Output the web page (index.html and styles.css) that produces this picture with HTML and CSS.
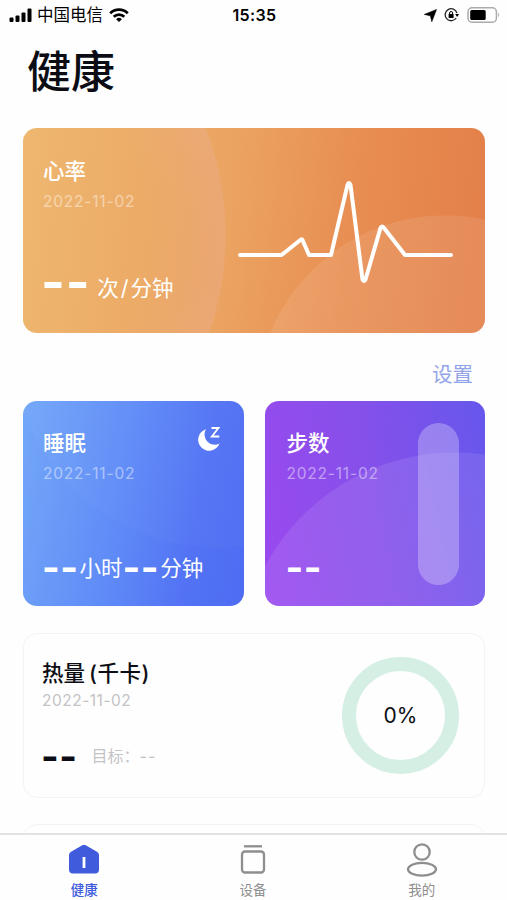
FILE: index.html
```
<!DOCTYPE html>
<html lang="zh-CN">
    <head>
        <meta charset="utf-8">
        <title>健康</title>
        <link rel="stylesheet" href="styles.css">
    </head>

    <body>
        <header class="status">
            <div class="status-left">
                <svg class="signal" width="24" height="16" viewBox="0 0 24 16">
                    <rect x="0.5" y="10.5" width="4" height="4.5" rx="1"/>
                    <rect x="6.5" y="8.5" width="4" height="6.5" rx="1"/>
                    <rect x="12.5" y="5.5" width="4" height="9.5" rx="1"/>
                    <rect x="18.5" y="1.5" width="4" height="13.5" rx="1"/>
                </svg>
                <span class="carrier">中国电信</span>
                <svg width="20" height="16" viewBox="0 0 20 16" fill="none" stroke="#000" stroke-width="2.7">
                    <path d="M1.2 6.2a12.4 12.4 0 0 1 17.6 0"/>
                    <path d="M4.7 9.8a7.6 7.6 0 0 1 10.6 0"/>
                    <path d="M7.1 12.2a4.1 4.1 0 0 1 5.8 0L10 15z" fill="#000" stroke="none"/>
                </svg>
            </div>
            <div class="clock">15:35</div>
            <div class="status-right">
                <svg width="13" height="13" viewBox="0 0 13 13">
                    <path d="M12.5 0.5L7.8 12.7L6.4 6.8L0.3 5.4z" stroke="#000" stroke-width="0.6" stroke-linejoin="round"/>
                </svg>
                <svg width="16" height="14" viewBox="0 0 16 14">
                    <path d="M12.2 10A6 6 0 1 1 12.9 5" fill="none" stroke="#222" stroke-width="1.3"/>
                    <path d="M11.2 6h3.8l-1.9 3z"/>
                    <rect x="4.6" y="6" width="5" height="4" rx="0.6"/>
                    <path d="M5.6 6.2V5a1.5 1.5 0 0 1 3 0v1.2" fill="none" stroke="#000"/>
                </svg>
                <svg width="33" height="16" viewBox="0 0 33 16">
                    <rect x="1" y="0.8" width="28.4" height="14.4" rx="4" fill="#fff" stroke="#aaa" stroke-width="1.5"/>
                    <rect x="3.2" y="3" width="15.5" height="10" rx="1.5"/>
                    <path d="M31 5.6q2 2.4 0 4.8z" fill="#aaa"/>
                </svg>
            </div>
        </header>

        <main>
            <h1>健康</h1>

            <section class="card heart">
                <div>
                    <h2>心率</h2>
                    <p class="date">2022-11-02</p>
                    <p class="value"><span class="dash dash-big">--</span><span class="unit">次<span class="slash">/</span>分钟</span></p>
                </div>
                <svg class="pulse" width="216" height="104" viewBox="0 0 216 104">
                    <path d="M2 75H43.500L63 59.500Q64 59 64.500 60L71 75H93L109.500 5Q111 1 112.500 5L124.500 99.500Q126 103 127.500 99.500L142.500 48Q144 45 146 48L167 75H213"/>
                </svg>
            </section>

            <a class="settings">设置</a>

            <div class="row">
                <section class="card sleep">
                    <div>
                        <h2>睡眠</h2>
                        <p class="date">2022-11-02</p>
                        <p class="value"><span class="dash">--</span><span>小时</span><span class="dash">--</span><span>分钟</span></p>
                    </div>
                    <svg class="moon" width="24" height="26" viewBox="0 0 24 26">
                        <path d="M9 3.200A11 11 0 1 0 22.500 17.500A10.200 10.200 0 0 1 9 3.200z" fill="#fff"/>
                        <path d="M14.500 2H21.500L14.800 10.500H22.300" fill="none" stroke="#fff" stroke-width="1.800"/>
                    </svg>
                </section>
                <section class="card steps">
                    <div>
                        <h2>步数</h2>
                        <p class="date">2022-11-02</p>
                        <p class="value"><span class="dash">--</span></p>
                    </div>
                    <div class="bar"></div>
                </section>
            </div>

            <section class="card calories">
                <div>
                    <h2>热量<span class="kcal">(千卡)</span></h2>
                    <p class="date">2022-11-02</p>
                    <p class="value"><span class="dash">--</span><span class="goal">目标：<span class="goal-value">--</span></span></p>
                </div>
                <div class="ring">0%</div>
            </section>

            <section class="card next"></section>
        </main>

        <nav>
            <a class="tab active">
                <svg width="32" height="32" viewBox="0 0 32 32">
                    <path d="M14.300 2.200Q16 1.200 17.700 2.200L29 8.800Q31 10 31 12V26.500Q31 30.500 27 30.500H5Q1 30.500 1 26.500V12Q1 10 3 8.800z" fill="#405cdc"/>
                    <path d="M16 14V25" stroke="#fff" stroke-width="2.800"/>
                </svg>
                <span>健康</span>
            </a>
            <a class="tab">
                <svg width="32" height="32" viewBox="0 0 32 32" fill="none" stroke="#8e8e8e" stroke-width="2.300">
                    <path d="M7 3.300H25"/>
                    <rect x="5" y="8.500" width="22" height="21" rx="3"/>
                </svg>
                <span>设备</span>
            </a>
            <a class="tab">
                <svg width="32" height="34" viewBox="0 0 32 34" fill="none" stroke="#8e8e8e" stroke-width="2.300">
                    <circle cx="16" cy="9" r="7.700"/>
                    <ellipse cx="16" cy="26.200" rx="14" ry="6.400"/>
                </svg>
                <span>我的</span>
            </a>
        </nav>
    </body>
</html>
```
FILE: styles.css
```
* {
    box-sizing: border-box;
}

body {
    margin: 0;
    height: 900px;
    display: flex;
    flex-direction: column;
    overflow: hidden;
    background-color: #fefefe;
    color: #0c0d14;
    font-family: Inter, "Noto Sans CJK SC", sans-serif;
}

h1, h2, p {
    margin: 0;
}

svg {
    display: block;
    flex: none;
}

/* status bar */
.status {
    height: 30px;
    padding: 0 7px 0 9px;
    display: grid;
    grid-template-columns: 1fr auto 1fr;
    align-items: center;
    color: #000;
}

.status-left, .status-right {
    display: flex;
    align-items: center;
}

.status-right {
    justify-content: flex-end;
    gap: 7px;
}

.carrier {
    margin: 0 6px 0 4px;
    font-size: 16.500px;
    line-height: 24px;
}

.clock {
    font-size: 16px;
    font-weight: 600;
    letter-spacing: 0.4px;
}

/* content */
main {
    flex: 1;
    min-height: 0;
    overflow: hidden;
    padding: 0 22px 0 23px;
}

h1 {
    height: 98px;
    padding: 10px 0 0 4px;
    font-size: 44px;
    line-height: 64px;
    font-weight: 500;
}

.card {
    display: flex;
    justify-content: space-between;
    height: 205px;
    padding: 26px 20px 0;
    border-radius: 14px;
    color: #fff;
}

h2 {
    font-size: 21.500px;
    line-height: 32px;
    font-weight: 500;
}

.date {
    font-size: 15.500px;
    line-height: 20px;
    margin-top: 5px;
    letter-spacing: 0.800px;
    opacity: 0.45;
}

.value {
    display: flex;
    align-items: center;
    height: 32px;
    margin-top: 68px;
    font-size: 21.500px;
    line-height: 32px;
    white-space: nowrap;
}

.dash {
    margin: 0 0 3px -1px;
    font-size: 38px;
    font-weight: 700;
    letter-spacing: 0.500px;
}

.heart {
    padding-top: 27px;
    background:
        radial-gradient(circle at -97px 107px, transparent 220px, rgba(235, 175, 150, 0.18) 270px, rgba(235, 175, 150, 0.35) 299px, transparent 300px),
        radial-gradient(circle at 422px 276px, rgba(255, 255, 255, 0.09) 188px, transparent 189px),
        linear-gradient(96deg, #eeb76f, #eba362 45%, #e88e52 70%, #e37f49);
}

.heart .value {
    margin-top: 60px;
}

.dash-big {
    margin: 0 0 13px -2px;
    font-size: 51px;
    letter-spacing: 0.800px;
}

.unit {
    margin-left: 7px;
}

.slash {
    margin: 0 2px;
}

.pulse {
    margin: 25px 11px 0 0;
    fill: none;
    stroke: #fff;
    stroke-width: 4;
    stroke-linecap: round;
    stroke-linejoin: round;
}

.settings {
    display: block;
    height: 68px;
    padding: 26px 12px 0 0;
    text-align: right;
    font-size: 20.500px;
    line-height: 32px;
    color: #93a4e8;
}

.row {
    display: grid;
    grid-template-columns: repeat(2, minmax(0, 1fr));
    gap: 21px;
}

.sleep {
    background:
        radial-gradient(circle at 195px -60px, rgba(255, 255, 255, 0.02) 206px, transparent 207px),
        linear-gradient(101deg, #73a7f8, #5f8bf7 45%, #5373f4 75%, #4d6cf2);
}

/* the value line runs on below the moon */
.sleep > div {
    width: 150px;
}

.sleep .value {
    gap: 1px;
}

.moon {
    margin: -1px 3px 0 0;
}

.steps {
    padding-left: 22px;
    background:
        radial-gradient(circle at 190px 267px, rgba(255, 255, 255, 0.09) 215px, transparent 216px),
        linear-gradient(78deg, #9a49ee, #8650ea 50%, #6657ec);
}

.bar {
    width: 41px;
    height: 162px;
    margin: -4px 6px 0 0;
    border-radius: 21px;
    background-color: rgba(255, 255, 255, 0.27);
}

.calories {
    height: 165px;
    margin-top: 27px;
    padding: 23px 25px 0 18px;
    border: 1px solid #f3f3f3;
    background-color: #fefefe;
    color: #0c0d14;
}

.kcal {
    margin-left: 4px;
    letter-spacing: 0.500px;
}

.calories .date {
    margin-top: 2px;
    letter-spacing: 0.500px;
    color: #c3c3c5;
    opacity: 1;
}

.calories .value {
    margin-top: 29px;
}

.calories .dash {
    margin-bottom: 1px;
}

.goal {
    margin-left: 14px;
    font-size: 16px;
    color: #c3c3c5;
}

.goal-value {
    letter-spacing: 1px;
}

.ring {
    width: 117px;
    height: 117px;
    border: 14px solid #d5efe4;
    border-radius: 50%;
    text-align: center;
    font-size: 21px;
    line-height: 89px;
}

.next {
    margin-top: 26px;
    border: 1px solid #f3f3f3;
}

/* bottom tabs */
nav {
    height: 67px;
    flex: none;
    display: grid;
    grid-template-columns: repeat(3, 1fr);
    padding-right: 1px;
    border-top: 2px solid #e2e2e2;
    background-color: #fefefe;
}

.tab {
    display: flex;
    flex-direction: column;
    align-items: center;
    justify-content: space-between;
    padding: 8px 0 0;
    font-size: 13.500px;
    line-height: 20px;
    color: #8e8e8e;
}

.active {
    color: #405cdc;
    font-weight: 500;
}
```
